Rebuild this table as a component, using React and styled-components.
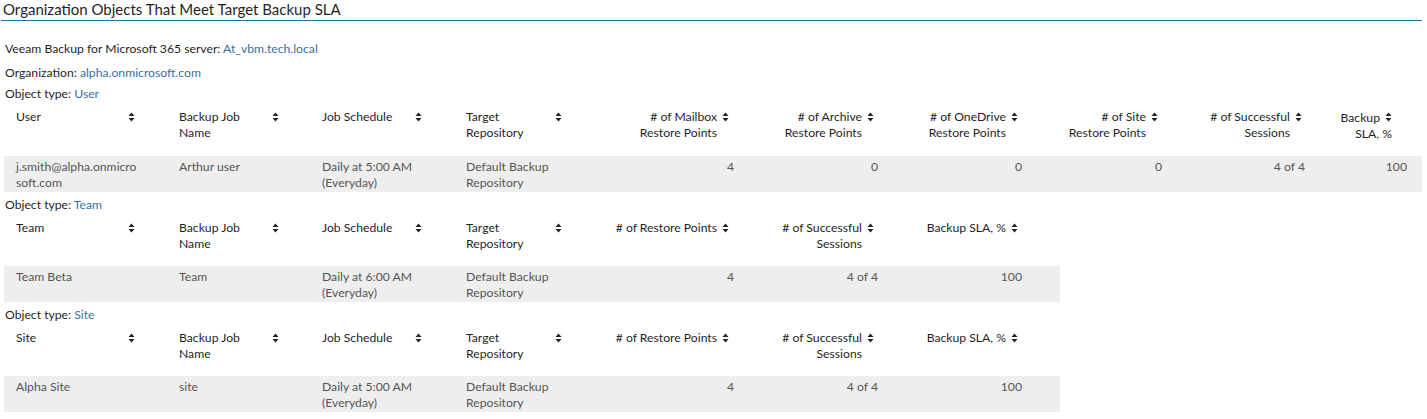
import React from "react";
import styled, { createGlobalStyle } from "styled-components";

const GlobalStyle = createGlobalStyle`
  html, body { margin: 0; padding: 0; background: #ffffff; }
  body { font-family: Lato, "Open Sans", sans-serif; font-size: 12.2px; color: #222; }
`;

const Page = styled.div`
  width: 1422px;
  padding-left: 1px;
  box-sizing: border-box;
`;

const Title = styled.h1`
  margin: 0;
  font-size: 15px;
  font-weight: 400;
  line-height: 18px;
  height: 21px;
  padding-left: 2px;
  color: #1f1f1f;
  border-bottom: 1px solid #1f6fa8;
  box-sizing: border-box;
`;

const Info = styled.div`
  padding-left: 4px;
  padding-top: 20px;
  display: flex;
  flex-direction: column;
  gap: 8px;
`;

const Line = styled.div`
  line-height: 16px;
  color: #1f1f1f;
`;

const Value = styled.span`
  color: #3b6ea5;
`;

const Section = styled.div`
  display: flex;
  flex-direction: column;
`;

const ObjType = styled.div`
  line-height: 16px;
  padding-left: 4px;
  color: #1f1f1f;
  margin-top: ${(p) => p.$mt}px;
`;

const Grid = styled.div`
  display: grid;
  grid-template-columns: ${(p) => p.$cols};
  margin-left: 3px;
  width: max-content;
  line-height: 16px;
`;

const HeadCell = styled.div`
  display: flex;
  align-items: flex-start;
  justify-content: ${(p) => (p.$num ? "flex-end" : "space-between")};
  padding: 7px ${(p) => p.$pr}px 14px ${(p) => (p.$num ? 0 : 12)}px;
  color: #1f1f1f;
  text-align: ${(p) => (p.$num ? "right" : "left")};
`;

const HeadLabel = styled.span`
  display: block;
`;

const SortIcon = styled.svg`
  flex: none;
  width: 7px;
  height: 12px;
  margin-top: 2px;
  margin-left: ${(p) => (p.$num ? 5 : 0)}px;
  vertical-align: ${(p) => (p.$inline ? "-1px" : "baseline")};
`;

const DataCell = styled.div`
  background: #eeeeee;
  padding: 3px ${(p) => p.$pr}px 1px ${(p) => (p.$num ? 0 : 12)}px;
  color: #555555;
  text-align: ${(p) => (p.$num ? "right" : "left")};
  min-height: 32px;
`;

const Sort = ({ num, inline }) => (
  <SortIcon $num={num} $inline={inline} viewBox="0 0 7 12">
    <polygon points="0.5,5 3.5,1.5 6.5,5" fill="#222" />
    <polygon points="0.5,7 3.5,10.5 6.5,7" fill="#222" />
  </SortIcon>
);

const Lines = ({ lines }) =>
  lines.map((l, i) => (
    <React.Fragment key={i}>
      {i > 0 && <br />}
      {l}
    </React.Fragment>
  ));

const userCols = [
  { w: 163, head: ["User"], pr: 32 },
  { w: 143, head: ["Backup Job", "Name"], pr: 31 },
  { w: 144, head: ["Job Schedule"], pr: 32 },
  { w: 144, head: ["Target", "Repository"], pr: 36 },
  { w: 144, head: ["# of Mailbox", "Restore Points"], num: true, pr: 13, dpr: 8 },
  { w: 144, head: ["# of Archive", "Restore Points"], num: true, pr: 12, dpr: 8 },
  { w: 144, head: ["# of OneDrive", "Restore Points"], num: true, pr: 12, dpr: 8 },
  { w: 144, head: ["# of Site", "Restore Points"], num: true, pr: 16, dpr: 12 },
  { w: 144, head: ["# of Successful", "Sessions"], num: true, pr: 16, dpr: 13 },
  { w: 104, head: ["Backup", "SLA, %"], num: true, inline: true, pr: 30, dpr: 15 },
];

const shortCols = (first) => [
  { w: 163, head: [first], pr: 32 },
  { w: 143, head: ["Backup Job", "Name"], pr: 31 },
  { w: 144, head: ["Job Schedule"], pr: 32 },
  { w: 144, head: ["Target", "Repository"], pr: 36 },
  { w: 144, head: ["# of Restore Points"], num: true, pr: 13, dpr: 8 },
  { w: 144, head: ["# of Successful", "Sessions"], num: true, pr: 12, dpr: 8 },
  { w: 174, head: ["Backup SLA, %"], num: true, pr: 42, dpr: 38 },
];

const sections = [
  {
    type: "User",
    cols: userCols,
    row: [
      ["j.smith@alpha.onmicro", "soft.com"],
      ["Arthur user"],
      ["Daily at 5:00 AM", "(Everyday)"],
      ["Default Backup", "Repository"],
      ["4"],
      ["0"],
      ["0"],
      ["0"],
      ["4 of 4"],
      ["100"],
    ],
  },
  {
    type: "Team",
    cols: shortCols("Team"),
    row: [
      ["Team Beta"],
      ["Team"],
      ["Daily at 6:00 AM", "(Everyday)"],
      ["Default Backup", "Repository"],
      ["4"],
      ["4 of 4"],
      ["100"],
    ],
  },
  {
    type: "Site",
    cols: shortCols("Site"),
    row: [
      ["Alpha Site"],
      ["site"],
      ["Daily at 5:00 AM", "(Everyday)"],
      ["Default Backup", "Repository"],
      ["4"],
      ["4 of 4"],
      ["100"],
    ],
  },
];

const HeadContent = ({ c }) =>
  c.inline ? (
    <HeadLabel>
      {c.head[0]}
      <Sort num inline />
      <br />
      {c.head.slice(1).join(" ")}
    </HeadLabel>
  ) : (
    <>
      <HeadLabel>
        <Lines lines={c.head} />
      </HeadLabel>
      <Sort num={c.num} />
    </>
  );

const Table = ({ cols, row }) => (
  <Grid $cols={cols.map((c) => `${c.w}px`).join(" ")}>
    {cols.map((c, i) => (
      <HeadCell key={`h${i}`} $num={c.num} $pr={c.pr}>
        <HeadContent c={c} />
      </HeadCell>
    ))}
    {row.map((v, i) => (
      <DataCell key={`d${i}`} $num={cols[i].num} $pr={cols[i].dpr || 8}>
        <Lines lines={v} />
      </DataCell>
    ))}
  </Grid>
);

export default function App() {
  return (
    <Page>
      <GlobalStyle />
      <Title>Organization Objects That Meet Target Backup SLA</Title>
      <Info>
        <Line>
          Veeam Backup for Microsoft 365 server: <Value>At_vbm.tech.local</Value>
        </Line>
        <Line>
          Organization: <Value>alpha.onmicrosoft.com</Value>
        </Line>
      </Info>
      {sections.map((s) => (
        <Section key={s.type}>
          <ObjType $mt={5}>
            Object type: <Value>{s.type}</Value>
          </ObjType>
          <Table cols={s.cols} row={s.row} />
        </Section>
      ))}
    </Page>
  );
}
